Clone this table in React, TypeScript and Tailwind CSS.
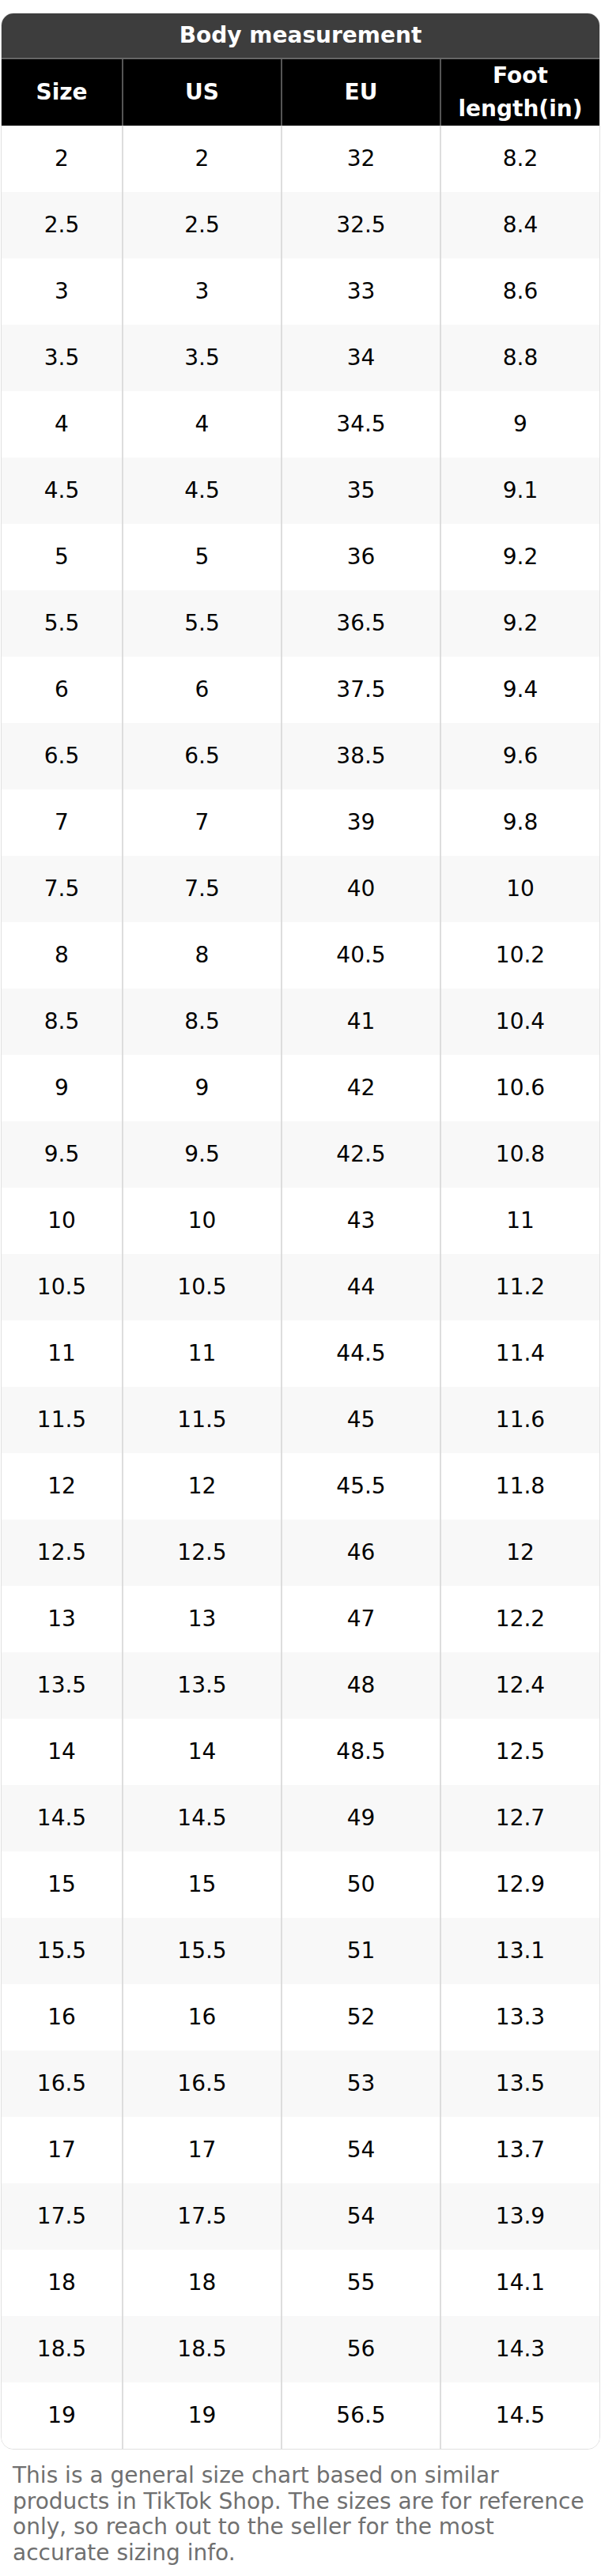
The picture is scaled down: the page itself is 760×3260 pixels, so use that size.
const rows: [string, string, string, string][] = [
  ["2", "2", "32", "8.2"],
  ["2.5", "2.5", "32.5", "8.4"],
  ["3", "3", "33", "8.6"],
  ["3.5", "3.5", "34", "8.8"],
  ["4", "4", "34.5", "9"],
  ["4.5", "4.5", "35", "9.1"],
  ["5", "5", "36", "9.2"],
  ["5.5", "5.5", "36.5", "9.2"],
  ["6", "6", "37.5", "9.4"],
  ["6.5", "6.5", "38.5", "9.6"],
  ["7", "7", "39", "9.8"],
  ["7.5", "7.5", "40", "10"],
  ["8", "8", "40.5", "10.2"],
  ["8.5", "8.5", "41", "10.4"],
  ["9", "9", "42", "10.6"],
  ["9.5", "9.5", "42.5", "10.8"],
  ["10", "10", "43", "11"],
  ["10.5", "10.5", "44", "11.2"],
  ["11", "11", "44.5", "11.4"],
  ["11.5", "11.5", "45", "11.6"],
  ["12", "12", "45.5", "11.8"],
  ["12.5", "12.5", "46", "12"],
  ["13", "13", "47", "12.2"],
  ["13.5", "13.5", "48", "12.4"],
  ["14", "14", "48.5", "12.5"],
  ["14.5", "14.5", "49", "12.7"],
  ["15", "15", "50", "12.9"],
  ["15.5", "15.5", "51", "13.1"],
  ["16", "16", "52", "13.3"],
  ["16.5", "16.5", "53", "13.5"],
  ["17", "17", "54", "13.7"],
  ["17.5", "17.5", "54", "13.9"],
  ["18", "18", "55", "14.1"],
  ["18.5", "18.5", "56", "14.3"],
  ["19", "19", "56.5", "14.5"],
];

const cols = "grid grid-cols-[154px_201px_201px_1fr]";

export default function App() {
  return (
    <div className="min-h-[3260px] bg-white pt-4 font-['DejaVu_Sans',sans-serif]">
      <div className="mx-px overflow-hidden rounded-2xl border border-[#e0e0e0]">
        {/* Title */}
        <div className="flex h-14 items-center justify-center bg-[#3d3d3d] text-[28px] font-bold text-white">
          Body measurement
        </div>

        {/* Header */}
        <div className={`${cols} h-[86px] border-t-2 border-[#666] bg-black text-[28px] font-bold text-white`}>
          <div className="flex items-center justify-center border-r-2 border-[#555]">Size</div>
          <div className="flex items-center justify-center border-r-2 border-[#555]">US</div>
          <div className="flex items-center justify-center border-r-2 border-[#555]">EU</div>
          <div className="flex items-center justify-center text-center">
            Foot
            <br />
            length(in)
          </div>
        </div>

        {/* Rows */}
        {rows.map((r, i) => (
          <div
            key={i}
            className={`${cols} h-[84px] text-[28px] text-black ${i % 2 === 1 ? "bg-[#f8f8f8]" : "bg-white"}`}
          >
            <div className="flex items-center justify-center border-r-2 border-[#dddddd]">{r[0]}</div>
            <div className="flex items-center justify-center border-r-2 border-[#dddddd]">{r[1]}</div>
            <div className="flex items-center justify-center border-r-2 border-[#dddddd]">{r[2]}</div>
            <div className="flex items-center justify-center">{r[3]}</div>
          </div>
        ))}
      </div>

      <p className="px-4 pt-[17px] text-[28px] leading-[32.5px] text-[#707070]">
        This is a general size chart based on similar products in TikTok Shop. The sizes are for reference only, so reach out to the seller for the most accurate sizing info.
      </p>
    </div>
  );
}
